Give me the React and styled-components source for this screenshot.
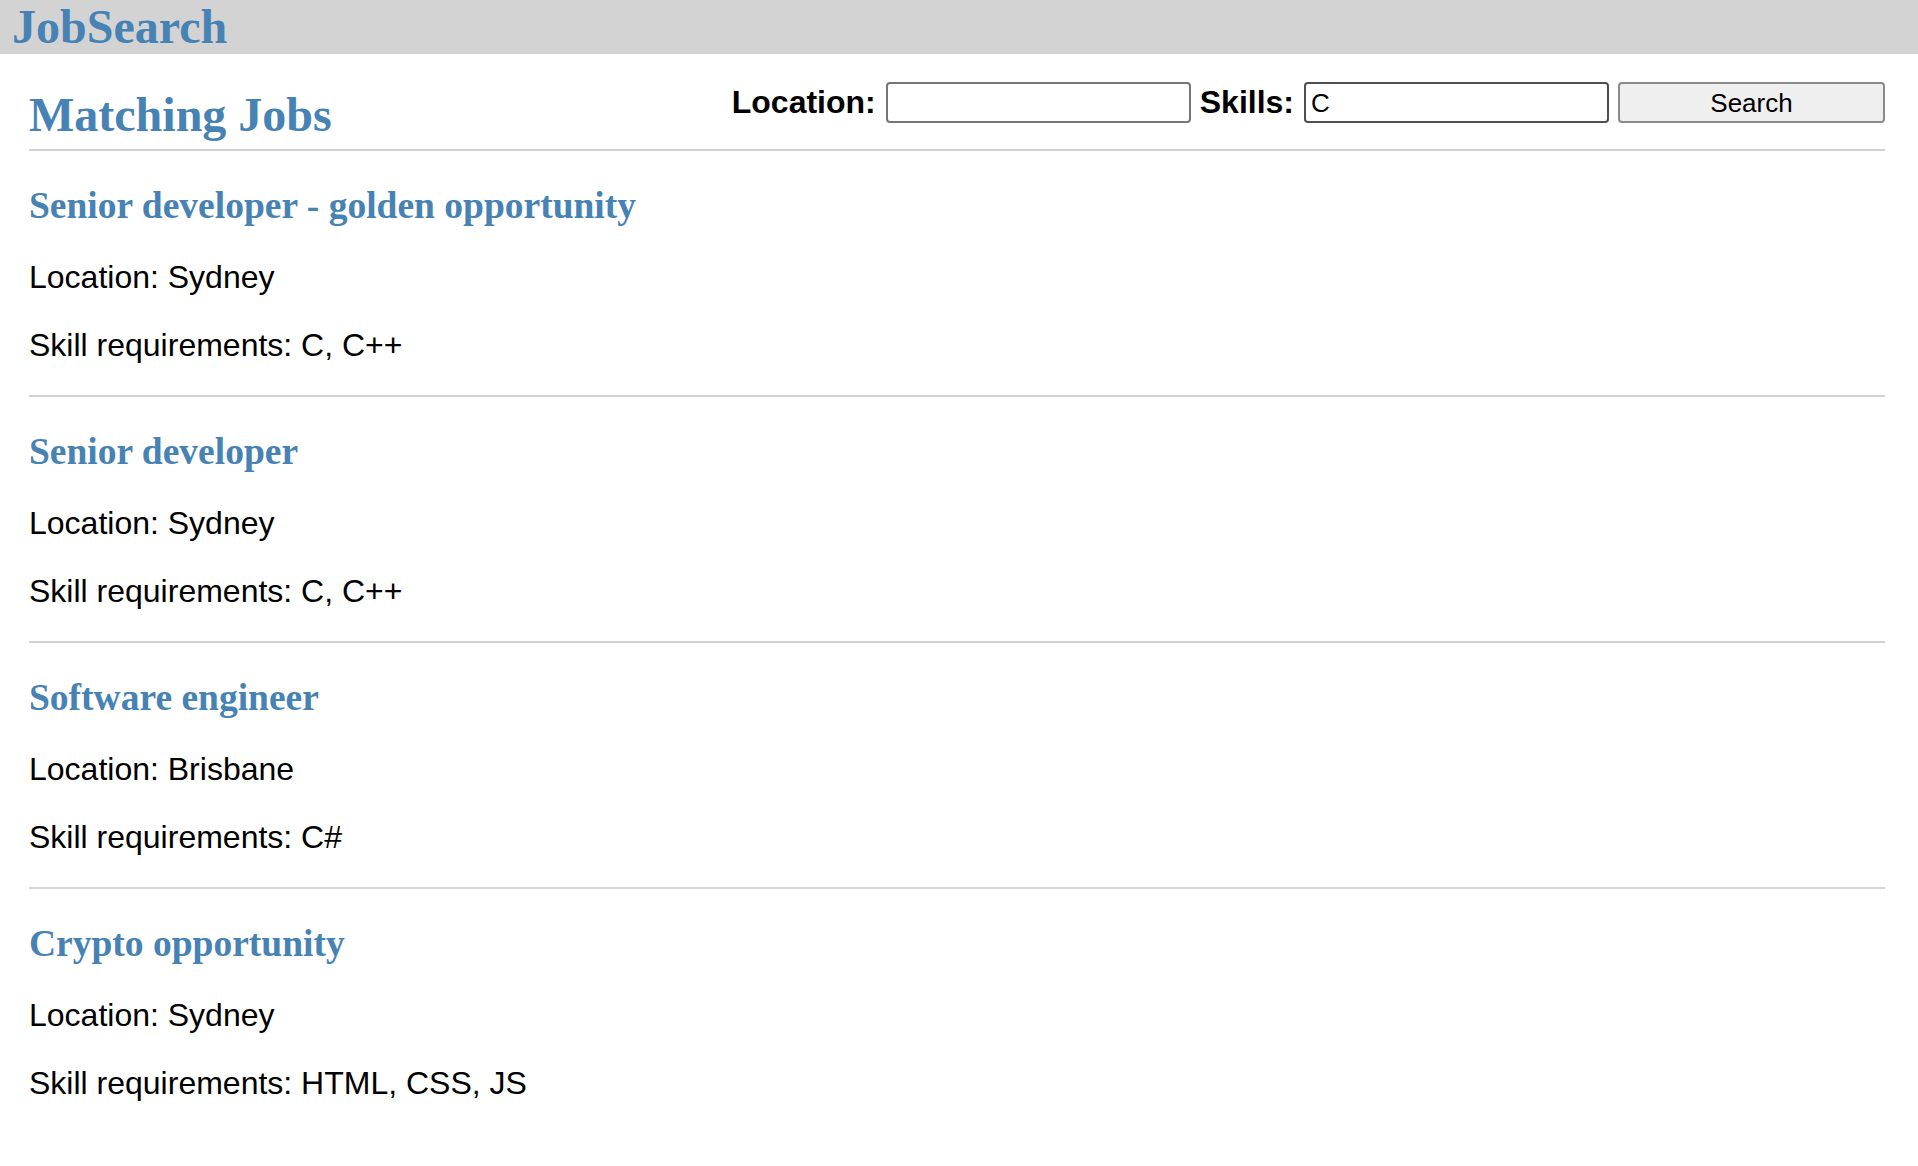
import React from "react";
import styled, { createGlobalStyle } from "styled-components";

const GlobalStyle = createGlobalStyle`
  html, body {
    margin: 0;
    padding: 0;
    background: #ffffff;
  }
  body {
    font-family: "Liberation Sans", Arial, sans-serif;
    font-size: 32px;
    color: #000000;
  }
`;

const TopBar = styled.header`
  height: 54px;
  background: #d3d3d3;
  padding: 0 12px;
  display: flex;
  align-items: center;
`;

const Brand = styled.h1`
  margin: 0;
  font-family: "Liberation Serif", "Times New Roman", serif;
  font-weight: bold;
  font-size: 48px;
  line-height: 54px;
  color: #4682b4;
`;

const Page = styled.main`
  padding: 0 33px 0 29px;
`;

const HeadRow = styled.section`
  display: flex;
  justify-content: space-between;
  align-items: flex-start;
  padding: 28px 0 6px;
  border-bottom: 2px solid #d3d3d3;
`;

const PageTitle = styled.h1`
  margin: 5px 0 0;
  font-family: "Liberation Serif", "Times New Roman", serif;
  font-weight: bold;
  font-size: 48px;
  line-height: 56px;
  color: #4682b4;
`;

const SearchForm = styled.form`
  display: flex;
  align-items: center;
  gap: 9px;
  height: 41px;
`;

const FieldLabel = styled.label`
  font-family: "Liberation Sans", Arial, sans-serif;
  font-weight: bold;
  font-size: 32px;
  line-height: 41px;
  margin-right: 1px;
`;

const TextInput = styled.input`
  box-sizing: border-box;
  width: 305px;
  height: 41px;
  margin: 0;
  padding: 2px 5px 0;
  border: 2px solid ${(p) => (p.$dark ? "#4f4f4f" : "#767676")};
  border-radius: 4px;
  background: #ffffff;
  font-family: "Liberation Sans", Arial, sans-serif;
  font-size: 26px;
  color: #000000;
  outline: none;
`;

const SearchButton = styled.button`
  box-sizing: border-box;
  width: 267px;
  height: 41px;
  margin: 0;
  padding-top: 2px;
  border: 2px solid #8a8a8a;
  border-radius: 4px;
  background: #efefef;
  font-family: "Liberation Sans", Arial, sans-serif;
  font-size: 26px;
  color: #000000;
  cursor: pointer;
`;

const JobList = styled.div`
  display: flex;
  flex-direction: column;
`;

const JobCard = styled.article`
  display: flex;
  flex-direction: column;
  padding: 33px 0 31px;
  & + & {
    border-top: 2px solid #d3d3d3;
  }
`;

const JobTitle = styled.h2`
  margin: 0 0 31px;
  font-family: "Liberation Serif", "Times New Roman", serif;
  font-weight: bold;
  font-size: 37.5px;
  line-height: 44px;
  color: #4682b4;
`;

const JobLine = styled.p`
  margin: 0;
  font-size: 32px;
  line-height: 37px;
  & + & {
    margin-top: 31px;
  }
`;

const jobs = [
  { title: "Senior developer - golden opportunity", location: "Sydney", skills: "C, C++" },
  { title: "Senior developer", location: "Sydney", skills: "C, C++" },
  { title: "Software engineer", location: "Brisbane", skills: "C#" },
  { title: "Crypto opportunity", location: "Sydney", skills: "HTML, CSS, JS" },
];

export default function App() {
  return (
    <>
      <GlobalStyle />
      <TopBar>
        <Brand>JobSearch</Brand>
      </TopBar>
      <Page>
        <HeadRow>
          <PageTitle>Matching Jobs</PageTitle>
          <SearchForm onSubmit={(e) => e.preventDefault()}>
            <FieldLabel htmlFor="loc">Location:</FieldLabel>
            <TextInput id="loc" type="text" defaultValue="" />
            <FieldLabel htmlFor="skills">Skills:</FieldLabel>
            <TextInput id="skills" type="text" defaultValue="C" $dark />
            <SearchButton type="submit">Search</SearchButton>
          </SearchForm>
        </HeadRow>
        <JobList>
          {jobs.map((job) => (
            <JobCard key={job.title}>
              <JobTitle>{job.title}</JobTitle>
              <JobLine>Location: {job.location}</JobLine>
              <JobLine>Skill requirements: {job.skills}</JobLine>
            </JobCard>
          ))}
        </JobList>
      </Page>
    </>
  );
}
